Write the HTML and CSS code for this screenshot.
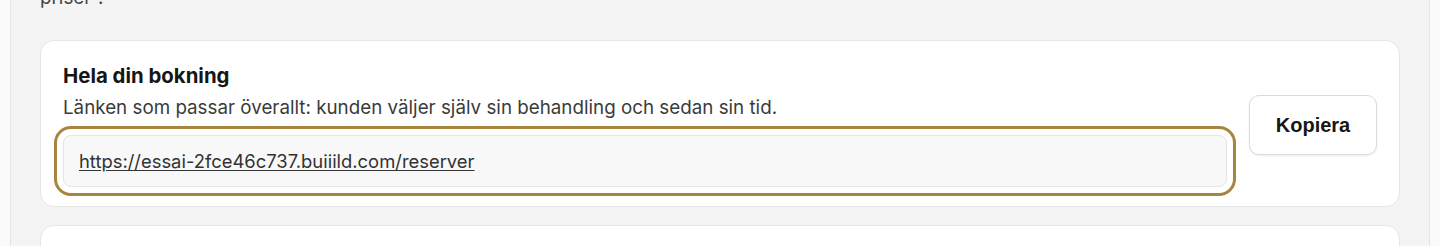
FILE: index.html
```html
<!DOCTYPE html>
<html lang="sv">
<head>
  <meta charset="UTF-8">
  <meta name="viewport" content="width=device-width, initial-scale=1.0">
  <title>Dela bokningslänk</title>

  <link rel="stylesheet" href="styles.css">

</head>
<body>

  <div class="panel">
    <p class="intro">priser”.</p>

    <!-- länk till hela bokningen -->
    <div class="link-card">
      <div class="link-info">
        <h4 class="link-title">Hela din bokning</h4>
        <p class="link-desc">Länken som passar överallt: kunden väljer själv sin behandling och sedan sin tid.</p>
        <div class="link-field">
          <a href="#" class="link-url">https://essai-2fce46c737.buiiild.com/reserver</a>
        </div>
      </div>
      <button class="copy-btn" type="button">Kopiera</button>
    </div>

    <div class="link-card next"></div>
  </div>

</body>
</html>
```

FILE: styles.css
```css
body {
  margin: 0;
  background-color: #fafafa;
  font-family: Inter, "Noto Sans", sans-serif;
  color: #1c1c1c;
  height: 246px;
  overflow: hidden;
}

.panel {
  margin: 0 10px;
  padding: 0 29px;
  min-height: 246px;
  background-color: #f4f4f4;
  border-left: 1px solid #e6e6e6;
  border-right: 1px solid #e6e6e6;
}

/* 위에서 이어지는 문단 (잘려 보임) */
.intro {
  margin: -15px 0 29px;
  font-size: 18.8px;
  line-height: 26px;
  color: #444;
}

.link-card {
  display: flex;
  align-items: center;
  gap: 22px;
  padding: 22px 22px 19px;
  background-color: #fff;
  border: 1px solid #e6e6e6;
  border-radius: 14px;
}

.link-card.next {
  margin-top: 18px;
  height: 60px;
}

.link-info {
  flex: 1;
}

.link-title {
  margin: 0;
  font-size: 20.4px;
  line-height: 26px;
  font-weight: 700;
  color: #161616;
}

.link-desc {
  margin: 6px 0 0;
  font-size: 18.8px;
  line-height: 26px;
  color: #3b3b3b;
}

/* 포커스 링: outline-offset 으로 흰 틈을 만듦 */
.link-field {
  box-sizing: border-box;
  margin-top: 14px;
  height: 52px;
  display: flex;
  align-items: center;
  padding: 0 15px;
  background-color: #f8f8f8;
  border: 1px solid #e4e4e4;
  border-radius: 8px;
  outline: 3px solid #a8853f;
  outline-offset: 6px;
}

.link-url {
  font-size: 18.4px;
  color: #333;
  text-decoration: underline;
  text-underline-offset: 2px;
}

.copy-btn {
  width: 128px;
  height: 60px;
  background-color: #fff;
  border: 1px solid #dcdcdc;
  border-radius: 10px;
  box-shadow: 0 1px 2px rgba(0, 0, 0, 0.08);
  font-family: "Liberation Sans", Arial, sans-serif;
  font-size: 20px;
  font-weight: 700;
  color: #161616;
}
```
